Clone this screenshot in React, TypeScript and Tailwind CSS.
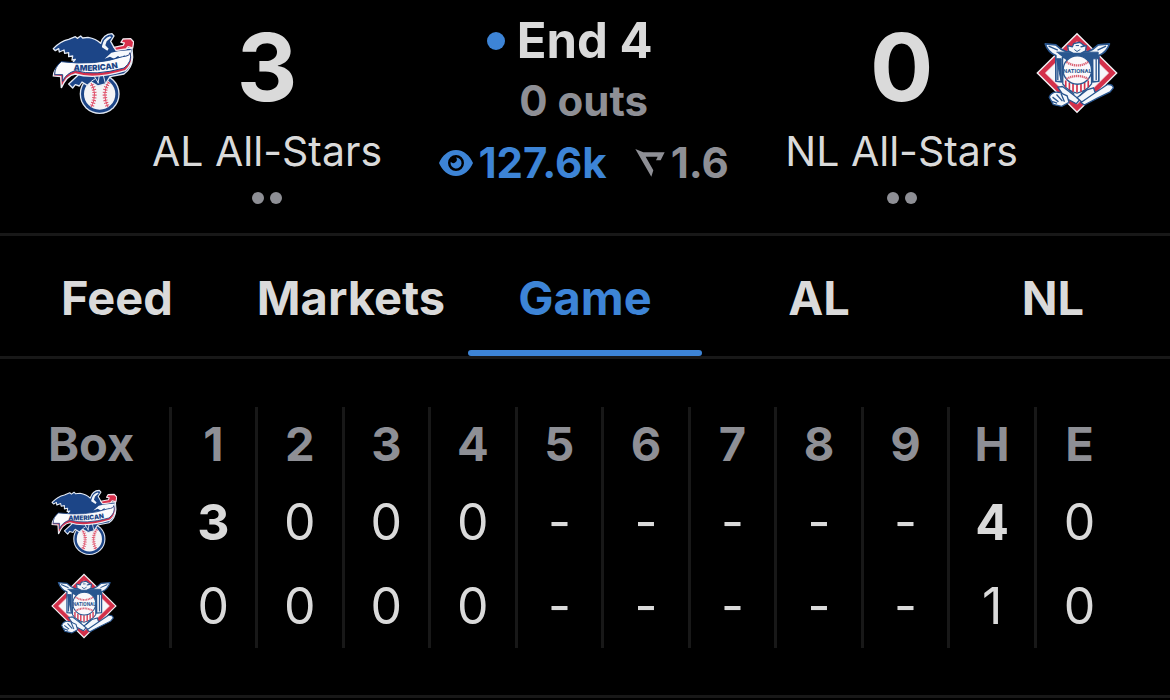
import { useId } from "react";

interface LogoProps {
  className: string;
}

interface Team {
  id: string;
  name: string;
  score: number;
  logo: (props: LogoProps) => React.ReactElement;
  line: string[];
  bold: number[];
}

function AmericanLogo({ className }: LogoProps) {
  const bannerId = useId();

  return (
    <svg className={className} viewBox="22 20 246 246" role="img" aria-label="American League">
      {/* ball */}
      <circle cx="165" cy="206" r="60" fill="#dfe6f0" />
      <circle cx="165" cy="206" r="56" fill="#1c4587" />
      <circle cx="165" cy="206" r="47" fill="#f4f4f6" />
      <path d="M138 170q22 34 2 76M192 170q-22 34-2 76" fill="none" stroke="#e0506a" strokeWidth="3" />
      <path d="M138 170q22 34 2 76M192 170q-22 34-2 76" fill="none" stroke="#e0506a" strokeWidth="13" strokeDasharray="3 5" />
      {/* wing, head and tail */}
      <path
        d="M26 70Q46 48 72 42L92 34L98 39L108 32L114 38L130 36Q154 40 168 54Q176 26 202 25L208 32L198 48L208 66L216 74L240 70L262 68L264 96Q262 130 238 146L196 154L182 176L160 182L140 170L128 180L112 170L104 182L92 178L84 188L72 176L100 150L84 112L92 102L82 104L84 92L72 94L72 82L60 84L58 74L44 80L42 70L32 76Z"
        fill="#1c4587"
        stroke="#e4eaf4"
        strokeWidth="4"
        strokeLinejoin="round"
      />
      <path d="M172 62q5-24 24-29l4 3-14 12-4 12 10 10-4 6-16-10Z" fill="#f2f5fa" />
      <path d="M180 100l20-18 20-4 40-4-10 24-12-8-6 10-12-8-12 8-12-6Z" fill="#f6f8fc" />
      <path d="M208 66L236 60L239 53L229 51L235 41L258 40L267 50L264 68L250 64L244 71L214 75Z" fill="#d9304c" stroke="#f4e8ee" strokeWidth="4" strokeLinejoin="round" />
      <path d="M148 152l14 22M164 150l-4 24M176 150l6 24M140 168l12-8" stroke="#e4eaf4" strokeWidth="3" />
      {/* banner */}
      <path
        d="M48 116Q150 128 226 98Q254 92 258 78Q270 112 242 136Q150 164 92 146Q66 150 50 188L48 154L26 152Q26 134 48 116Z"
        fill="#d9304c"
        stroke="#edf0f6"
        strokeWidth="4"
      />
      <path
        d="M50 109Q150 122 234 94Q256 92 256 82Q264 108 238 128Q150 153 92 136Q64 144 54 168L54 148L30 148Q30 124 50 109Z"
        fill="#fbfbfd"
        stroke="#1c4587"
        strokeWidth="3"
      />
      <path id={bannerId} d="M76 135Q156 141 230 126" fill="none" />
      <text fill="#1c4587" fontSize="24" fontWeight="900" textAnchor="middle" className="font-['Inter',sans-serif]">
        <textPath href={`#${bannerId}`} startOffset="50%">
          AMERICAN
        </textPath>
      </text>
    </svg>
  );
}

function NationalLogo({ className }: LogoProps) {
  return (
    <svg className={className} viewBox="16 22 248 246" role="img" aria-label="National League">
      <path d="M140 23L263 145L140 267L17 145Z" fill="#f3f3f6" />
      <path d="M140 29L257 145L140 261L23 145Z" fill="#d3304a" />
      <path d="M140 50L236 145L140 240L44 145Z" fill="#f6f7fa" stroke="#f3b7c1" strokeWidth="2" />
      {/* wings and pillars */}
      <path
        d="M44 57L76 60Q90 74 106 80L174 80Q190 74 204 60L238 57Q230 82 206 92L206 170L187 172L186 98L96 98L95 172L76 170L76 92Q52 82 44 57Z"
        fill="#f4f7fb"
        stroke="#29568f"
        strokeWidth="5"
        strokeLinejoin="round"
      />
      <path d="M78 82L204 82L204 102L188 102L188 170M92 170L92 102L78 102Z" fill="#29568f" stroke="#29568f" strokeWidth="3" />
      <path d="M82 102v64M198 102v64M54 64l28 12M228 64l-26 12" stroke="#29568f" strokeWidth="4" fill="none" />
      {/* eagle head */}
      <path d="M112 62L126 66L130 56L148 52L162 62L152 66L168 62L166 78L150 86L130 86L114 78Z" fill="#f4f7fb" stroke="#29568f" strokeWidth="4" strokeLinejoin="round" />
      <path d="M136 62h10M132 74l8 6 10-6" stroke="#29568f" strokeWidth="3" fill="none" />
      {/* shield and ball */}
      <path d="M97 150L97 178Q112 200 140 206Q168 200 184 178L184 150Z" fill="#fafafa" stroke="#29568f" strokeWidth="4" />
      <path d="M106 168v20M117 174v22M128 178v24M140 180v24M152 178v24M163 174v22M174 168v20" stroke="#d3304a" strokeWidth="5" />
      <circle cx="141" cy="136" r="43" fill="#faf9fb" stroke="#29568f" strokeWidth="4" />
      <path d="M108 112q33 20 66 0M108 163q33-18 66 0" fill="none" stroke="#db6174" strokeWidth="7" strokeDasharray="4 2" />
      <text x="141" y="144" textAnchor="middle" fontSize="18" fontWeight="700" fill="#29568f" className="font-['Roboto',sans-serif]">
        NATIONAL
      </text>
      {/* crossed bats and glove */}
      <path d="M82 188L96 186L112 198L148 226L138 238L104 220Z" fill="#f5f8fc" stroke="#29568f" strokeWidth="4" />
      <path d="M140 220L170 196L190 190L194 202L206 208L156 234Z" fill="#f5f8fc" stroke="#29568f" strokeWidth="4" />
      <path d="M152 234L196 204L232 180Q248 178 250 190L240 202L200 222L162 242Z" fill="#f5f8fc" stroke="#29568f" strokeWidth="4" />
      <path d="M56 218Q64 198 88 204L110 214L116 234L94 246L68 240Z" fill="#f5f8fc" stroke="#29568f" strokeWidth="4" />
      <path d="M66 218l18 14M78 210l18 20M92 208l10 24M62 230l18 6M116 196l16 14M166 196l-18 18" stroke="#29568f" strokeWidth="4" />
      <path d="M128 240h24l-12 16Z" fill="#d3304a" />
    </svg>
  );
}

const teams: Team[] = [
  {
    id: "al",
    name: "AL All-Stars",
    score: 3,
    logo: AmericanLogo,
    line: ["3", "0", "0", "0", "-", "-", "-", "-", "-", "4", "0"],
    bold: [0, 9],
  },
  {
    id: "nl",
    name: "NL All-Stars",
    score: 0,
    logo: NationalLogo,
    line: ["0", "0", "0", "0", "-", "-", "-", "-", "-", "1", "0"],
    bold: [],
  },
];

const tabs = ["Feed", "Markets", "Game", "AL", "NL"];
const columns = ["1", "2", "3", "4", "5", "6", "7", "8", "9", "H", "E"];

function TeamScore({ team }: { team: Team }) {
  return (
    <div className="flex flex-col items-center pt-[27px]">
      <span className="text-[94px] leading-[80px] font-bold">{team.score}</span>
      <span className="mt-3 text-[41px] leading-[64px] whitespace-nowrap">{team.name}</span>
      <div className="mt-[9px] flex gap-[6px]">
        <span className="size-3 rounded-full bg-[#8e8f95]" />
        <span className="size-3 rounded-full bg-[#8e8f95]" />
      </div>
    </div>
  );
}

function App() {
  const [away, home] = teams;

  return (
    <div className="min-h-screen bg-black font-['Inter',sans-serif] text-[#dadada]">
      <header className="flex justify-between border-b-[3px] border-[#181818] px-[52px] pb-[29px]">
        <div className="flex gap-[18px]">
          <AmericanLogo className="mt-8 size-[82px]" />
          <TeamScore team={away} />
        </div>

        <div className="flex flex-col items-center pt-[11px] font-bold whitespace-nowrap">
          <div className="flex items-center gap-3 pr-7 text-[49px] leading-[60px]">
            <span className="size-[18px] rounded-full bg-[#3d84d6]" />
            End 4
          </div>
          <div className="text-[42px] leading-[60px] text-[#8e8f95]">0 outs</div>
          <div className="flex items-center text-[42px] leading-[64px]">
            <span className="flex items-center gap-[6px] text-[#3d84d6]">
              <svg className="h-[26px] w-[34px]" viewBox="0 0 34 26" aria-hidden="true">
                <path
                  d="M17 0C9 0 3 6 0 13c3 7 9 13 17 13s14-6 17-13C31 6 25 0 17 0Zm0 21a8 8 0 1 1 0-16 8 8 0 0 1 0 16Z"
                  fill="currentColor"
                  fillRule="evenodd"
                />
                <path d="M17 7.500a5.500 5.500 0 1 1-5.300 4.200 3.200 3.200 0 0 0 5.300-4.200Z" fill="currentColor" />
              </svg>
              127.6k
            </span>
            <span className="ml-7 flex items-center gap-[6px] text-[#8e8f95]">
              <svg className="h-[28px] w-[30px]" viewBox="0 0 88 84" aria-hidden="true">
                <path d="M0 0L24 10H88L76 34H62L67 23H31L54 64L48 83Z" fill="currentColor" />
              </svg>
              1.6
            </span>
          </div>
        </div>

        <div className="flex gap-[18px]">
          <TeamScore team={home} />
          <NationalLogo className="mt-8 size-[82px]" />
        </div>
      </header>

      <nav className="grid grid-cols-5 border-b-[3px] border-[#181818]">
        {tabs.map((tab) => (
          <button
            key={tab}
            type="button"
            className={
              tab === "Game"
                ? "relative h-[120px] pt-1 text-[47px] font-bold text-[#3d84d6]"
                : "relative h-[120px] pt-1 text-[47px] font-bold"
            }
          >
            {tab}
            {tab === "Game" && <span className="absolute inset-x-0 bottom-0 h-[6px] rounded-full bg-[#3d84d6]" />}
          </button>
        ))}
      </nav>

      <section className="border-b-[3px] border-[#181818] px-12 pt-12 pb-[47px]">
        <table className="w-full table-fixed">
          <thead>
            <tr className="h-[73px] text-[47px] leading-[60px] text-[#8e8f95]">
              <th scope="col" className="w-[122px] p-0 text-left font-bold">
                Box
              </th>
              {columns.map((column) => (
                <th key={column} scope="col" className="border-l-[3px] border-[#181818] p-0 font-bold">
                  {column}
                </th>
              ))}
            </tr>
          </thead>
          <tbody>
            {teams.map((team) => (
              <tr key={team.id} className="h-[84px] text-[50px] leading-[60px]">
                <th scope="row" className="p-0 pl-[3px]">
                  <team.logo className="size-[66px]" />
                </th>
                {team.line.map((value, i) => (
                  <td
                    key={i}
                    className={
                      team.bold.includes(i)
                        ? "border-l-[3px] border-[#181818] p-0 text-center font-bold"
                        : "border-l-[3px] border-[#181818] p-0 text-center"
                    }
                  >
                    {value}
                  </td>
                ))}
              </tr>
            ))}
          </tbody>
        </table>
      </section>
    </div>
  );
}

export default App;
